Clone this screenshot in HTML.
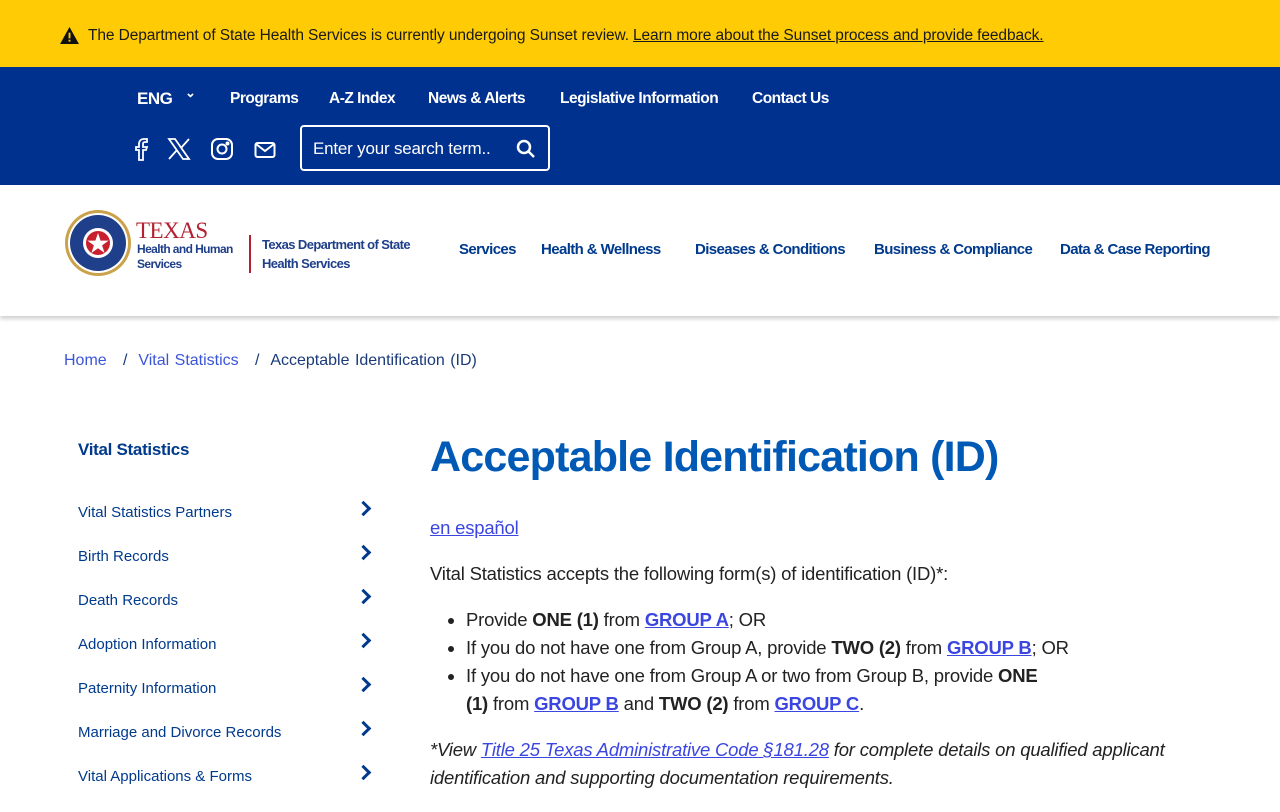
<!DOCTYPE html>
<html><head><meta charset="utf-8"><style>
*{margin:0;padding:0;box-sizing:border-box}
body{width:1280px;height:800px;overflow:hidden;font-family:"Liberation Sans",sans-serif;background:#fff;color:#222}
.alert{height:67px;background:#ffcb05;display:flex;align-items:center;padding-left:60px;padding-top:4px;font-size:15.5px;color:#1a1a1a;letter-spacing:-0.1px}
.alert a{color:#1a1a1a;margin-left:4px}
.top{height:118px;background:#00318f;color:#fff;position:relative}
.nav1 span{position:absolute;top:23px;font-weight:bold;font-size:15.5px;letter-spacing:-0.5px;white-space:nowrap}
.search{position:absolute;left:300px;top:58px;width:250px;height:46px;border:2px solid #fff;border-radius:4px;font-size:17px;padding:12px 0 0 11px;letter-spacing:-0.2px}
.icons svg{position:absolute}
.hdr{height:131px;position:relative;box-shadow:0 3px 4px rgba(0,0,0,.18)}
.mnav span{position:absolute;top:56px;font-weight:bold;color:#003a8c;font-size:15px;letter-spacing:-0.6px;white-space:nowrap}
.crumb{position:absolute;top:352px;left:64px;font-size:16px;color:#1a3a7a;word-spacing:1px}
.crumb a{color:#3b55d8;text-decoration:none}
.side{position:absolute;left:78px;top:440px;width:300px;color:#003a8c}
.side h3{font-size:17px;letter-spacing:-0.3px;margin-bottom:44px}
.side div{font-size:15px;height:44px;position:relative}
.side div::after{content:"";position:absolute;left:280px;top:-1px;width:8px;height:8px;border-right:3px solid #003a8c;border-top:3px solid #003a8c;transform:rotate(45deg)}
.main{position:absolute;left:430px;top:432px;width:790px;font-size:18.5px;color:#222;letter-spacing:-0.2px}
h1{font-size:43px;color:#005ab5;letter-spacing:-0.8px;margin-bottom:32px;line-height:50px}
.main a{color:#3b46e0}
ul{margin:18px 0 18px 36px;line-height:28px}
p{line-height:28px}
</style></head><body>
<div class="alert"><svg width="19" height="17" viewBox="0 0 20 18" style="margin-right:9px"><path d="M10 0L20 18H0Z" fill="#111"/><rect x="9" y="6" width="2" height="6" fill="#ffcb05"/><rect x="9" y="13.5" width="2" height="2" fill="#ffcb05"/></svg>The Department of State Health Services is currently undergoing Sunset review. <a href="#">Learn more about the Sunset process and provide feedback.</a></div>
<div class="top">
<div class="nav1"><span style="left:137px;font-size:17px;top:22px">ENG</span><span style="left:185px;font-size:13px;top:18px">&#8964;</span><span style="left:230px">Programs</span><span style="left:329px">A-Z Index</span><span style="left:428px">News &amp; Alerts</span><span style="left:560px">Legislative Information</span><span style="left:752px">Contact Us</span></div>
<div class="icons">
<svg style="left:131px;top:137px;position:absolute" width="0" height="0"></svg>
<svg style="left:131px;top:70px" width="20" height="24" viewBox="0 0 20 24" fill="none" stroke="#fff" stroke-width="1.8"><path d="M12 23V13h3l1-3h-4V7c0-1 .5-2 2-2h2V2h-3c-3 0-5 2-5 5v3H5v3h3v10z"/></svg>
<svg style="left:167px;top:71px" width="24" height="22" viewBox="0 0 24 22" fill="none" stroke="#fff" stroke-width="1.8"><path d="M2 1h6l14 20h-6z"/><path d="M22 1L14 10M2 21l8-9"/></svg>
<svg style="left:210px;top:70px" width="24" height="24" viewBox="0 0 24 24" fill="none" stroke="#fff" stroke-width="2"><rect x="2" y="2" width="20" height="20" rx="6"/><circle cx="12" cy="12" r="4.5"/><circle cx="17.5" cy="6.5" r="1" fill="#fff"/></svg>
<svg style="left:254px;top:74px" width="22" height="18" viewBox="0 0 22 18" fill="none" stroke="#fff" stroke-width="2"><rect x="1.5" y="2" width="19" height="14" rx="2"/><path d="M2 3l9 7 9-7"/></svg>
</div>
<div class="search">Enter your search term..<svg style="position:absolute;right:12px;top:12px" width="20" height="20" viewBox="0 0 20 20" fill="none" stroke="#fff" stroke-width="2.5"><circle cx="8" cy="8" r="6"/><path d="M12.5 12.5L18 18"/></svg></div>
</div>
<div class="hdr">
<svg style="position:absolute;left:64px;top:24px" width="68" height="68" viewBox="0 0 68 68"><circle cx="34" cy="34" r="33" fill="#c9a24b"/><circle cx="34" cy="34" r="30" fill="#fff"/><circle cx="34" cy="34" r="28" fill="#1f3f8a"/><circle cx="34" cy="34" r="15" fill="#fff"/><circle cx="34" cy="34" r="12" fill="#c8202f"/><path d="M34 24l2.6 7.6h8l-6.5 4.8 2.5 7.6-6.6-4.7-6.6 4.7 2.5-7.6-6.5-4.8h8z" fill="#fff"/></svg>
<div style="position:absolute;left:136px;top:34px;color:#b3202f;font-family:'Liberation Serif',serif;font-size:23px;line-height:24px;letter-spacing:-0.5px">TEXAS</div>
<div style="position:absolute;left:137px;top:57px;color:#1f3f8a;font-weight:bold;font-size:12px;line-height:15px;letter-spacing:-0.6px">Health and Human<br>Services</div>
<div style="position:absolute;left:249px;top:50px;width:1.5px;height:38px;background:#b3202f"></div>
<div style="position:absolute;left:262px;top:50px;color:#1f3f8a;font-weight:bold;font-size:13px;line-height:19px;letter-spacing:-0.6px">Texas Department of State<br>Health Services</div>
<div class="mnav"><span style="left:459px">Services</span><span style="left:541px">Health &amp; Wellness</span><span style="left:695px">Diseases &amp; Conditions</span><span style="left:874px">Business &amp; Compliance</span><span style="left:1060px">Data &amp; Case Reporting</span></div>
</div>
<div class="crumb"><a href="#">Home</a> &nbsp; / &nbsp;<a href="#">Vital Statistics</a> &nbsp; / &nbsp;Acceptable Identification (ID)</div>
<div class="side"><h3>Vital Statistics</h3>
<div>Vital Statistics Partners</div><div>Birth Records</div><div>Death Records</div><div>Adoption Information</div><div>Paternity Information</div><div>Marriage and Divorce Records</div><div>Vital Applications &amp; Forms</div></div>
<div class="main"><h1>Acceptable Identification (ID)</h1>
<p><a href="#">en español</a></p>
<p style="margin-top:18px">Vital Statistics accepts the following form(s) of identification (ID)*:</p>
<ul><li>Provide <b>ONE (1)</b> from <a href="#"><b>GROUP A</b></a>; OR</li>
<li>If you do not have one from Group A, provide <b>TWO (2)</b> from <a href="#"><b>GROUP B</b></a>; OR</li>
<li>If you do not have one from Group A or two from Group B, provide <b>ONE<br>(1)</b> from <a href="#"><b>GROUP B</b></a> and <b>TWO (2)</b> from <a href="#"><b>GROUP C</b></a>.</li></ul>
<p><i>*View <a href="#">Title 25 Texas Administrative Code §181.28</a> for complete details on qualified applicant identification and supporting documentation requirements.</i></p>
</div>
</body></html>
